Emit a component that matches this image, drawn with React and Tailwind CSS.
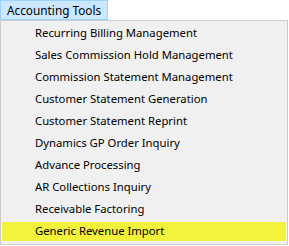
import React from "react";

const items = [
  "Recurring Billing Management",
  "Sales Commission Hold Management",
  "Commission Statement Management",
  "Customer Statement Generation",
  "Customer Statement Reprint",
  "Dynamics GP Order Inquiry",
  "Advance Processing",
  "AR Collections Inquiry",
  "Receivable Factoring",
  "Generic Revenue Import",
];

export default function App() {
  return (
    <div className="w-[289px] h-[246px] bg-white text-[11.3px] text-black font-['Noto_Sans',sans-serif] overflow-hidden">
      <div className="w-[108px] h-[20px] bg-[#cce8ff] border border-[#99d1ff] pl-[6px] leading-[18px] text-[11.8px]">
        Accounting Tools
      </div>
      <div className="w-[288px] h-[225px] border border-[#cccccc] bg-[#f0f0f0] p-[1px] flex flex-col">
        {items.map((t, i) =>
          i === items.length - 1 ? (
            <div key={t} className="h-[22px] pt-[2px] pb-[1px]">
              <div className="h-full flex items-center pl-[33px] bg-[#f2f23a]">{t}</div>
            </div>
          ) : (
            <div key={t} className="h-[22px] flex items-center pl-[33px]">
              {t}
            </div>
          )
        )}
      </div>
    </div>
  );
}
